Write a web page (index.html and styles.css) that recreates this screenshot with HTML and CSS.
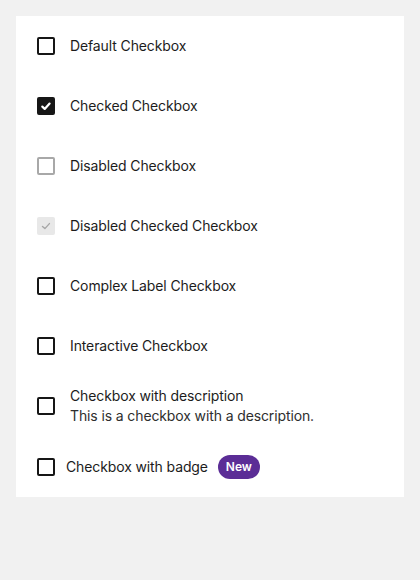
FILE: index.html
```html
<!DOCTYPE html>
<html lang="en">
<head>
<meta charset="utf-8">
<title>Checkboxes</title>
<link rel="stylesheet" href="styles.css">
</head>
<body>
<div class="card">
  <div class="row">
    <span class="box"></span>
    <span class="label">Default Checkbox</span>
  </div>
  <div class="row">
    <span class="box checked"><svg viewBox="0 0 18 18" width="18" height="18"><polyline points="5.3,9.6 7.7,11.9 12.6,6.6" fill="none" stroke="#fff" stroke-width="2.2" stroke-linecap="round" stroke-linejoin="round"/></svg></span>
    <span class="label">Checked Checkbox</span>
  </div>
  <div class="row">
    <span class="box disabled"></span>
    <span class="label">Disabled Checkbox</span>
  </div>
  <div class="row">
    <span class="box disabled-checked"><svg viewBox="0 0 18 18" width="18" height="18"><polyline points="5.5,9.4 7.9,11.6 12.4,6.6" fill="none" stroke="#a6a6a6" stroke-width="1.4" stroke-linecap="round" stroke-linejoin="round"/></svg></span>
    <span class="label">Disabled Checked Checkbox</span>
  </div>
  <div class="row">
    <span class="box"></span>
    <span class="label">Complex Label Checkbox</span>
  </div>
  <div class="row">
    <span class="box"></span>
    <span class="label">Interactive Checkbox</span>
  </div>
  <div class="row">
    <span class="box"></span>
    <span class="text">
      <span class="label">Checkbox with description</span>
      <span class="desc">This is a checkbox with a description.</span>
    </span>
  </div>
  <div class="row row-badge">
    <span class="box"></span>
    <span class="label">Checkbox with badge</span>
    <span class="badge">New</span>
  </div>
</div>
</body>
</html>
```

FILE: styles.css
```css
html, body {
  margin: 0;
  padding: 0;
  background: #f1f1f1;
}
body {
  padding: 16px;
  font-family: Inter, "Liberation Sans", sans-serif;
  color: #1c1c1c;
}
.card {
  width: 388px;
  background: #ffffff;
}
.row {
  height: 60px;
  display: flex;
  align-items: center;
  padding-left: 21px;
  gap: 15px;
}
.row-badge {
  height: 61px;
  gap: 11px;
}
.box {
  width: 18px;
  height: 18px;
  box-sizing: border-box;
  border: 2px solid #161616;
  border-radius: 2px;
  flex: none;
  position: relative;
}
.box svg {
  position: absolute;
  left: -2px;
  top: -2px;
}
.checked {
  background: #161616;
}
.disabled {
  border-color: #a8a8a8;
}
.disabled-checked {
  border: none;
  background: #e8e8e8;
}
.disabled-checked svg {
  left: 0;
  top: 0;
}
.label {
  font-size: 14px;
  line-height: 20px;
  letter-spacing: -0.12px;
}
.text {
  display: flex;
  flex-direction: column;
}
.desc {
  font-size: 14px;
  line-height: 20px;
  letter-spacing: -0.12px;
  color: #2e2e2e;
}
.badge {
  background: #5b2d96;
  color: #ffffff;
  font-size: 12px;
  font-weight: 600;
  height: 24px;
  display: inline-flex;
  align-items: center;
  padding: 0 8px;
  border-radius: 12px;
  margin-left: -1px;
}
```
